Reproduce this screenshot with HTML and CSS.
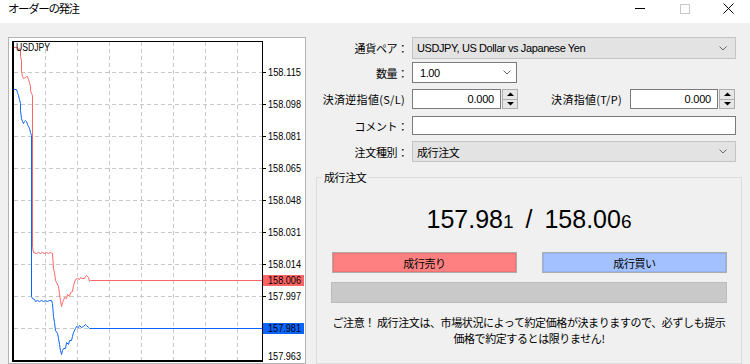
FILE: index.html
```html
<!DOCTYPE html>
<html lang="ja">
<head>
<meta charset="utf-8">
<title>オーダーの発注</title>
<link rel="stylesheet" href="styles.css">
</head>
<body>
<div class="titlebar">
  <span class="title">オーダーの発注</span>
  <div class="controls">
    <span class="ctl"><svg width="10" height="1" viewBox="0 0 10 1"><rect width="10" height="1" fill="#000"/></svg></span>
    <span class="ctl"><svg width="10" height="10" viewBox="0 0 10 10"><rect x="0.5" y="0.5" width="9" height="9" fill="none" stroke="#c8c8c8"/></svg></span>
    <span class="ctl close"><svg width="11" height="11" viewBox="0 0 11 11"><path d="M0.5,0.5L10.5,10.5M10.5,0.5L0.5,10.5" stroke="#000" stroke-width="1" fill="none"/></svg></span>
  </div>
</div>
<div class="content">
  <div class="chart-panel">
    <svg width="296" height="325" viewBox="9 38 296 325">
      <g stroke="#c8c8c8" stroke-width="1" stroke-dasharray="4 3" fill="none">
        <path d="M45.5,42V360M77.5,42V360M109.5,42V360M141.5,42V360M173.5,42V360M205.5,42V360M237.5,42V360"/>
        <path d="M14,72.5H262M14,104.5H262M14,136.5H262M14,168.5H262M14,200.5H262M14,232.5H262M14,264.5H262M14,296.5H262M14,328.5H262"/>
      </g>
      <g fill="none" stroke-width="1" transform="translate(0.5,0.5)">
        <polyline stroke="#0a64ff" points="12,89 16,89 17,92 18,95 19,99 20,103 20,110 21,118 22,121 23,123 24,121 25,120 26,121 27,124 28,126 29,128 30,132 31,135 31,296 32,298 34,299 35,301 37,300 39,301 41,300 43,301 45,300 47,301 49,300 51,300 52,303 53,316 54,322 55,330 57,333 58,338 59,344 60,350 61,354 62,350 63,348 65,348 66,342 68,344 69,340 71,340 72,336 73,332 75,328 76,326 78,327 79,325 81,327 83,326 85,324 86,325 88,327 89,328 262,328"/>
        <polyline stroke="#ff6464" points="13,47 17,47 18,49 19,48 20,50 20,56 21,60 21,70 22,76 23,78 25,77 26,76 27,76 28,79 29,82 30,86 30,90 31,93 32,95 32,247 33,252 36,253 38,252 40,253 42,252 44,253 46,252 48,253 50,252 52,253 53,268 54,272 55,280 56,282 58,286 59,293 60,300 61,306 62,302 63,300 64,297 66,298 67,294 69,296 70,292 72,291 73,285 75,279 77,278 79,279 80,277 82,278 84,278 85,276 86,275 88,277 89,281 90,280 262,280"/>
      </g>
      <rect x="12" y="41" width="251" height="1" fill="#000"/>
      <rect x="262" y="41" width="1" height="321" fill="#000"/>
      <rect x="12" y="41" width="2" height="321" fill="#000"/>
      <rect x="12" y="360" width="251" height="2" fill="#000"/>
      <path d="M263,72.5H266M263,104.5H266M263,136.5H266M263,168.5H266M263,200.5H266M263,232.5H266M263,264.5H266M263,296.5H266" stroke="#000" stroke-width="1"/>
      <text class="sym" x="16" y="51" textLength="34" lengthAdjust="spacingAndGlyphs">USDJPY</text>
      <g class="axis">
        <text x="268" y="76" textLength="33" lengthAdjust="spacingAndGlyphs">158.115</text>
        <text x="268" y="108" textLength="33" lengthAdjust="spacingAndGlyphs">158.098</text>
        <text x="268" y="140" textLength="33" lengthAdjust="spacingAndGlyphs">158.081</text>
        <text x="268" y="172" textLength="33" lengthAdjust="spacingAndGlyphs">158.065</text>
        <text x="268" y="204" textLength="33" lengthAdjust="spacingAndGlyphs">158.048</text>
        <text x="268" y="236" textLength="33" lengthAdjust="spacingAndGlyphs">158.031</text>
        <text x="268" y="268" textLength="33" lengthAdjust="spacingAndGlyphs">158.014</text>
        <text x="268" y="300" textLength="33" lengthAdjust="spacingAndGlyphs">157.997</text>
        <text x="268" y="360" textLength="33" lengthAdjust="spacingAndGlyphs">157.963</text>
        <rect x="263" y="275" width="41" height="11" fill="#ff6464"/>
        <text x="268" y="284" fill="#fff" textLength="33" lengthAdjust="spacingAndGlyphs">158.006</text>
        <rect x="263" y="323" width="41" height="11" fill="#0a64ff"/>
        <text x="268" y="332" fill="#fff" textLength="33" lengthAdjust="spacingAndGlyphs">157.981</text>
      </g>
    </svg>
  </div>
  <div class="form">
    <div class="row r1">
      <span class="lbl">通貨ペア：</span>
      <div class="combo disabled w-full"><span class="val">USDJPY, US Dollar vs Japanese Yen</span><svg class="chev" width="8" height="5" viewBox="0 0 8 5"><path d="M0.5,0.5L4,4L7.5,0.5" fill="none" stroke="#666"/></svg></div>
    </div>
    <div class="row r2">
      <span class="lbl">数量：</span>
      <div class="combo white w-vol"><span class="val">1.00</span><svg class="chev" width="8" height="5" viewBox="0 0 8 5"><path d="M0.5,0.5L4,4L7.5,0.5" fill="none" stroke="#666"/></svg></div>
    </div>
    <div class="row r3">
      <span class="lbl wide">決済逆指値(S/L)</span>
      <div class="spin">
        <div class="num w-sl">0.000</div>
        <div class="spinner"><span class="half"><svg width="7" height="4" viewBox="0 0 7 4"><path d="M0,4L3.5,0.5L7,4Z" fill="#000"/></svg></span><span class="half lower"><svg width="7" height="4" viewBox="0 0 7 4"><path d="M0,0L3.5,3.5L7,0Z" fill="#000"/></svg></span></div>
      </div>
      <span class="lbl2">決済指値(T/P)</span>
      <div class="spin">
        <div class="num w-tp">0.000</div>
        <div class="spinner"><span class="half"><svg width="7" height="4" viewBox="0 0 7 4"><path d="M0,4L3.5,0.5L7,4Z" fill="#000"/></svg></span><span class="half lower"><svg width="7" height="4" viewBox="0 0 7 4"><path d="M0,0L3.5,3.5L7,0Z" fill="#000"/></svg></span></div>
      </div>
    </div>
    <div class="row r4">
      <span class="lbl">コメント：</span>
      <div class="text-input"></div>
    </div>
    <div class="row r5">
      <span class="lbl">注文種別：</span>
      <div class="combo disabled w-full"><span class="val jp">成行注文</span><svg class="chev" width="8" height="5" viewBox="0 0 8 5"><path d="M0.5,0.5L4,4L7.5,0.5" fill="none" stroke="#666"/></svg></div>
    </div>
    <fieldset class="group">
      <legend>成行注文</legend>
      <div class="price">157.98<span class="pip">1</span> / 158.00<span class="pip">6</span></div>
      <div class="buttons">
        <div class="btn sell">成行売り</div>
        <div class="btn buy">成行買い</div>
      </div>
      <div class="progress"></div>
      <p class="notice">ご注意！ 成行注文は、市場状況によって約定価格が決まりますので、必ずしも提示<br>価格で約定するとは限りません!</p>
    </fieldset>
  </div>
</div>
</body>
</html>
```

FILE: styles.css
```css
* { box-sizing: border-box; }
html, body { margin: 0; padding: 0; }
body {
  width: 750px;
  height: 364px;
  overflow: hidden;
  background: #f0f0f0;
  font-family: "Liberation Sans", "Noto Sans CJK JP", sans-serif;
  font-size: 12px;
  color: #000;
}
.titlebar {
  height: 23px;
  background: #fff;
  display: flex;
  align-items: flex-start;
}
.title {
  padding-left: 8px;
  font-family: "Noto Sans CJK JP", sans-serif;
  font-size: 11.5px;
  letter-spacing: -1.4px;
  line-height: 17px;
}
.controls {
  margin-left: auto;
  display: flex;
  height: 17px;
}
.ctl {
  width: 45px;
  display: flex;
  align-items: center;
  justify-content: center;
}
.ctl.close { width: 43px; }
.ctl svg { display: block; }

.content {
  display: flex;
  padding: 14px 0 0 8px;
  height: 341px;
}
.chart-panel {
  flex: none;
  width: 298px;
  height: 327px;
  border: 1px solid #b4b4b4;
  background: #fff;
}
.chart-panel svg { display: block; }
.sym { font-family: "Liberation Sans", sans-serif; font-size: 10px; fill: #000; }
.axis text { font-family: "Liberation Sans", sans-serif; font-size: 10px; fill: #000; }

.form {
  margin-left: 10px;
  width: 426px;
  display: flex;
  flex-direction: column;
}
.row { display: flex; align-items: center; }
.lbl {
  width: 92px;
  margin-right: 4px;
  text-align: right;
  font-family: "Noto Sans CJK JP", sans-serif;
  font-size: 11px;
  letter-spacing: -0.3px;
  white-space: nowrap;
}
.lbl.wide { letter-spacing: 0.3px; padding-right: 3px; }
.r1 { height: 22px; }
.r2 { height: 21px; margin-top: 3px; }
.r3 { height: 20px; margin-top: 6px; }
.r4 { height: 19px; margin-top: 7px; }
.r5 { height: 21px; margin-top: 6px; }

.combo {
  height: 100%;
  display: flex;
  align-items: center;
  border: 1px solid #c4c4c4;
  background: #e3e3e3;
  padding-left: 4px;
}
.combo.white { background: #fff; border-color: #7a7a7a; padding-left: 7px; }
.combo .val { font-size: 11px; letter-spacing: -0.4px; white-space: nowrap; }
.combo .val.jp { font-family: "Noto Sans CJK JP", sans-serif; letter-spacing: -0.4px; }
.combo .chev { margin-left: auto; margin-right: 8px; display: block; }
.combo.white .chev { margin-right: 5px; }
.w-full { width: 324px; }
.w-vol { width: 105px; }

.spin { display: flex; height: 100%; }
.num {
  height: 100%;
  background: #fff;
  border: 1px solid #7a7a7a;
  font-size: 11px;
  letter-spacing: -0.2px;
  text-align: right;
  padding-right: 6px;
  line-height: 18px;
}
.w-sl { width: 89px; }
.w-tp { width: 88px; }
.spinner {
  width: 16px;
  height: 100%;
  margin-left: 1px;
  border: 1px solid #adadad;
  background: #e6e6e6;
  display: flex;
  flex-direction: column;
}
.half {
  flex: 1;
  display: flex;
  align-items: center;
  justify-content: center;
}
.half.lower { border-top: 1px solid #adadad; }
.half svg { display: block; }
.lbl2 {
  width: 112px;
  padding-right: 8px;
  text-align: right;
  font-family: "Noto Sans CJK JP", sans-serif;
  font-size: 11px;
  letter-spacing: 0.3px;
  white-space: nowrap;
}
.text-input {
  width: 324px;
  height: 100%;
  background: #fff;
  border: 1px solid #7a7a7a;
}

.group {
  margin: 8px 0 0 0;
  padding: 0;
  width: 426px;
  height: 194px;
  border: 1px solid #dcdcdc;
  min-width: 0;
}
.group legend {
  margin-left: 5px;
  padding: 0 2px;
  font-family: "Noto Sans CJK JP", sans-serif;
  font-size: 11px;
  letter-spacing: -0.4px;
  line-height: 14px;
}
.price {
  margin-top: 20px;
  text-align: center;
  font-size: 25px;
  line-height: 30px;
  height: 30px;
  white-space: nowrap;
  word-spacing: 5px;
}
.price .pip { font-size: 19px; }
.buttons {
  display: flex;
  margin-top: 18px;
  padding-left: 15px;
  gap: 25px;
}
.btn {
  width: 185px;
  height: 21px;
  border: 1px solid #acacac;
  display: flex;
  align-items: center;
  justify-content: center;
  font-family: "Noto Sans CJK JP", sans-serif;
  font-size: 11px;
  letter-spacing: -0.4px;
}
.sell { background: #ff8080; box-shadow: inset 0 0 0 1px #f07272; }
.buy { background: #a3c1ff; box-shadow: inset 0 0 0 1px #93b3f5; }
.progress {
  margin: 9px 0 0 14px;
  width: 396px;
  height: 21px;
  border: 1px solid #bcbcbc;
  background: #c9c9c9;
}
.notice {
  margin: 11px 0 0 0;
  text-align: center;
  font-family: "Noto Sans CJK JP", sans-serif;
  font-size: 11px;
  letter-spacing: -0.4px;
  line-height: 16px;
}
```
